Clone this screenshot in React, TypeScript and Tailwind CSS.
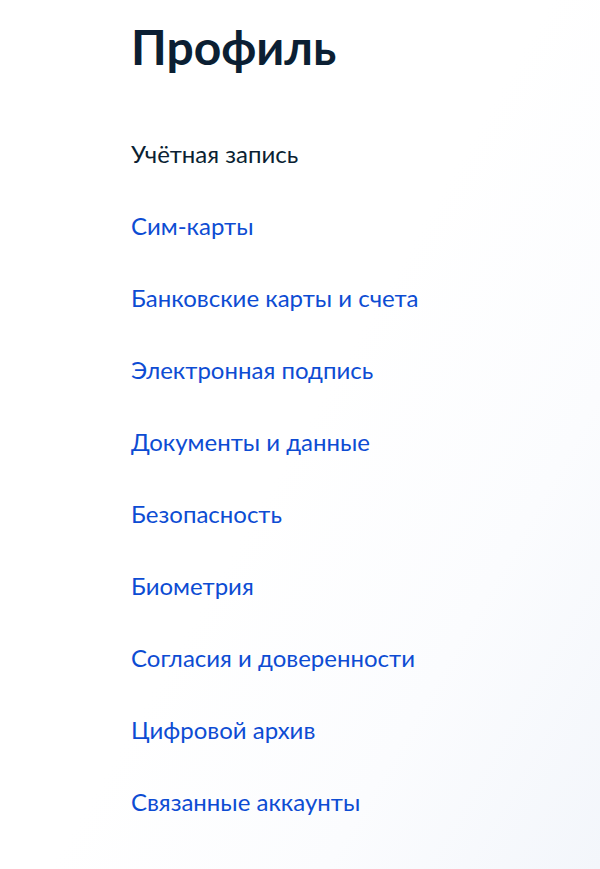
import React from "react";

const items = [
  "Сим-карты",
  "Банковские карты и счета",
  "Электронная подпись",
  "Документы и данные",
  "Безопасность",
  "Биометрия",
  "Согласия и доверенности",
  "Цифровой архив",
  "Связанные аккаунты",
];

export default function App() {
  return (
    <div
      className="w-[600px] h-[869px] overflow-hidden bg-[linear-gradient(120deg,#ffffff_0%,#ffffff_50%,#fbfcfe_75%,#f3f6fb_100%)] pl-[131px]"
      style={{ fontFamily: "Lato, 'Noto Sans', sans-serif" }}
    >
      <h1 className="pt-[17px] text-[48px] leading-[60px] font-bold text-[#0b1f33]">
        Профиль
      </h1>
      <ul className="mt-[61px] flex flex-col">
        <li className="h-[72px] flex items-start text-[24px] leading-[32px] text-[#0b1f33]">
          Учётная запись
        </li>
        {items.map((t) => (
          <li
            key={t}
            className="h-[72px] flex items-start text-[24px] leading-[32px] text-[#0d4cd3]"
          >
            {t}
          </li>
        ))}
      </ul>
    </div>
  );
}
